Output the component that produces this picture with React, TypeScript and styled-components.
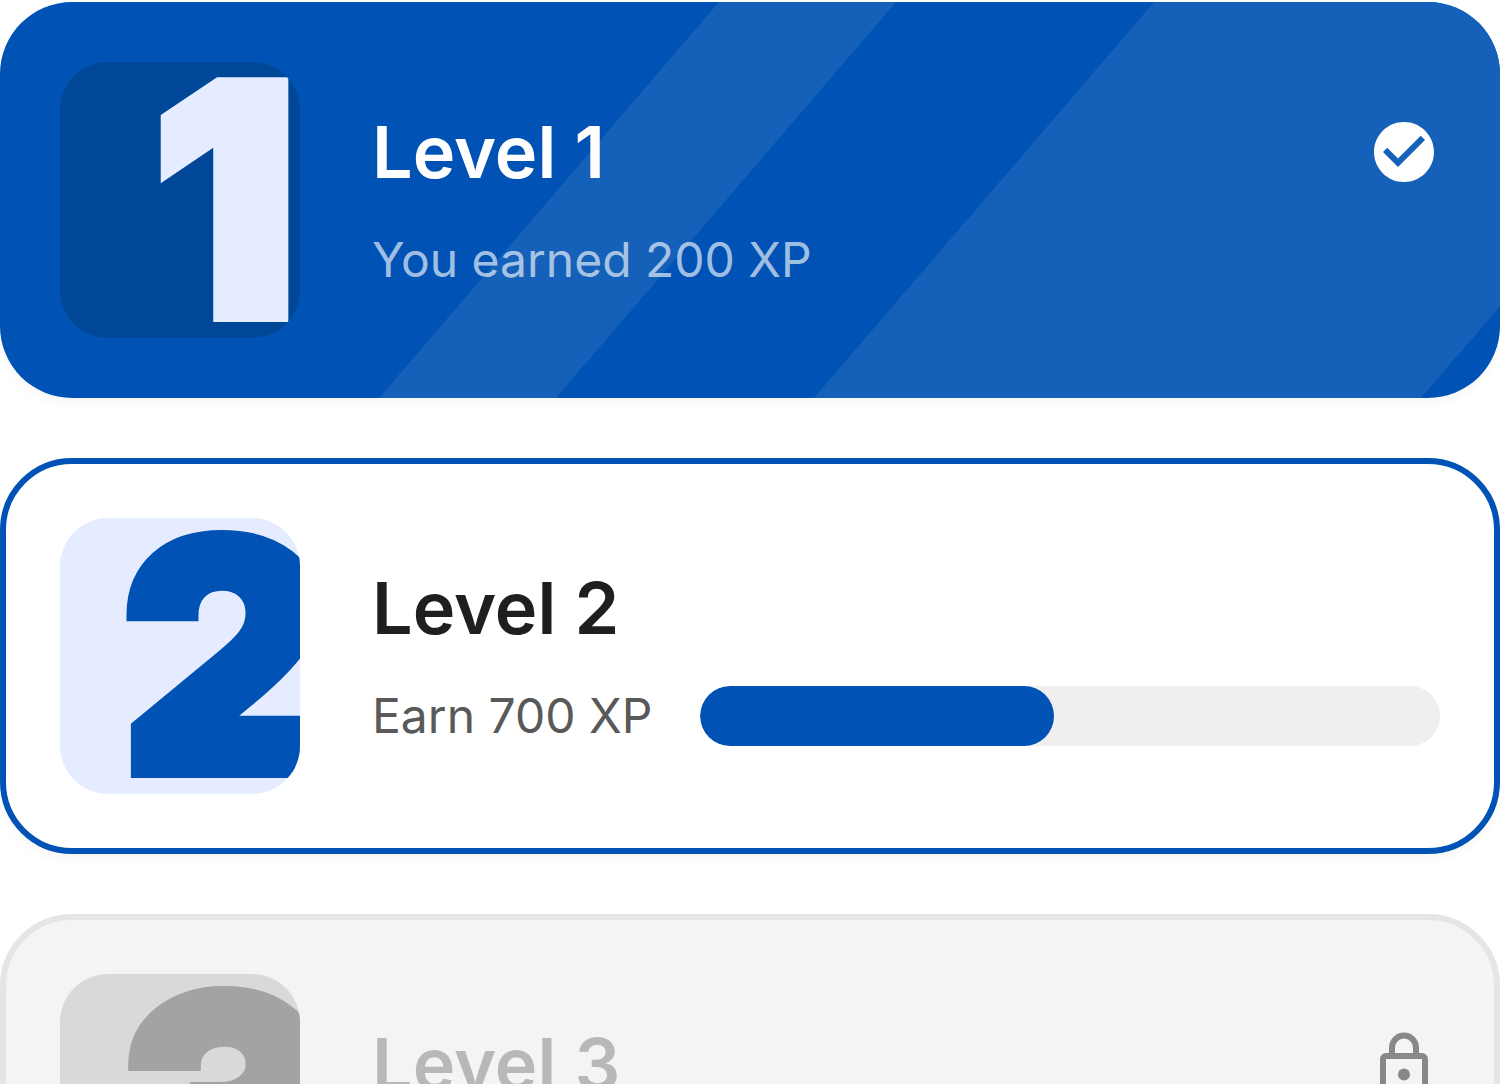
import React from "react";
import styled, { createGlobalStyle, css } from "styled-components";
import { MdCheckCircle } from "react-icons/md";

type Status = "done" | "active" | "locked";

const GlobalStyle = createGlobalStyle`
  body {
    margin: 0;
    background: #fff;
    font-family: Inter, "Liberation Sans", sans-serif;
  }
`;

const palette = {
  done: { card: "#0053b4", border: "#0053b4", tile: "#004797", numeral: "#e5ecff", title: "#fff", icon: "#fff" },
  active: { card: "#fff", border: "#0053b4", tile: "#e5ecff", numeral: "#0053b4", title: "#1f1f1f", icon: "#0053b4" },
  locked: { card: "#f4f4f4", border: "#e5e5e5", tile: "#d9d9d9", numeral: "#a3a3a3", title: "#b8b8b8", icon: "#888" },
};

const LevelList = styled.main`
  display: flex;
  flex-direction: column;
  gap: 60px;
  height: 100vh;
  padding-top: 2px;
  box-sizing: border-box;
  overflow: hidden;
`;

const Card = styled.section<{ $status: Status }>`
  position: relative;
  display: flex;
  flex-shrink: 0;
  align-items: flex-start;
  gap: 72px;
  box-sizing: border-box;
  padding: 60px;
  border-radius: 72px;
  background: ${(p) => palette[p.$status].card};
  box-shadow: 0 6px 12px rgba(0, 0, 0, 0.03);
  ${(p) =>
    p.$status !== "done" &&
    css`
      padding: 54px;
      border: 6px solid ${palette[p.$status].border};
    `}
`;

const Stripes = styled.svg`
  position: absolute;
  inset: 0;
  width: 100%;
  height: 100%;
  border-radius: 72px;
`;

const Tile = styled.div<{ $status: Status }>`
  position: relative;
  display: flex;
  flex-shrink: 0;
  align-items: center;
  justify-content: center;
  box-sizing: border-box;
  width: 240px;
  height: 276px;
  padding-left: 90px;
  border-radius: 48px;
  overflow: hidden;
  background: ${(p) => palette[p.$status].tile};
  color: ${(p) => palette[p.$status].numeral};
  font-size: 320px;
  font-weight: 900;
  line-height: 276px;
  -webkit-text-stroke: 12px currentColor;
`;

const Details = styled.div`
  position: relative;
  display: flex;
  flex: 1;
  flex-direction: column;
  gap: 36px;
  min-width: 0;
  padding-top: 48px;
`;

const Row = styled.div`
  display: flex;
  align-items: center;
  justify-content: space-between;
  gap: 48px;
`;

const Title = styled.h2<{ $status: Status }>`
  margin: 0;
  color: ${(p) => palette[p.$status].title};
  font-size: 72px;
  font-weight: 600;
  line-height: 84px;
`;

const Caption = styled.label<{ $status: Status }>`
  color: ${(p) => (p.$status === "done" ? "rgba(255, 255, 255, 0.64)" : "#595959")};
  font-size: 48px;
  font-weight: 400;
  line-height: 60px;
  white-space: nowrap;
`;

const Icon = styled.span<{ $status: Status }>`
  display: flex;
  color: ${(p) => palette[p.$status].icon};
`;

const Progress = styled.progress`
  appearance: none;
  flex: 1;
  min-width: 0;
  height: 60px;
  border: 0;
  border-radius: 30px;
  overflow: hidden;
  background: #efefef;

  &::-webkit-progress-bar {
    background: #efefef;
  }
  &::-webkit-progress-value {
    border-radius: 30px;
    background: #0053b4;
  }
`;

function LockIcon() {
  return (
    <svg width="72" height="72" viewBox="0 0 72 72" fill="none" stroke="currentColor" strokeWidth="6" aria-hidden="true">
      <path d="M24 27V19.5a12 12 0 0 1 24 0V27" />
      <rect x="15" y="28" width="42" height="38" rx="3" />
      <circle cx="36" cy="46.5" r="6" fill="currentColor" stroke="none" />
    </svg>
  );
}

interface Level {
  number: number;
  status: Status;
  caption?: string;
  progress?: number;
}

const levels: Level[] = [
  { number: 1, status: "done", caption: "You earned 200 XP" },
  { number: 2, status: "active", caption: "Earn 700 XP", progress: 478 },
  { number: 3, status: "locked" },
];

function LevelCard({ number, status, caption, progress }: Level) {
  const meterId = `level-${number}-progress`;
  return (
    <Card $status={status}>
      {status === "done" && (
        <Stripes viewBox="0 0 1500 396" preserveAspectRatio="xMaxYMid slice" aria-hidden="true">
          <path d="M719 0H896L556 396H379ZM1154 0H1762L1421 396H814Z" fill="#1561b9" />
        </Stripes>
      )}
      <Tile $status={status} aria-hidden="true">
        {number}
      </Tile>
      <Details>
        <Row>
          <Title $status={status}>Level {number}</Title>
          <Icon $status={status}>
            {status === "done" && <MdCheckCircle size={72} />}
            {status === "locked" && <LockIcon />}
          </Icon>
        </Row>
        {caption && (
          <Row>
            <Caption $status={status} as={progress ? "label" : "span"} htmlFor={progress ? meterId : undefined}>
              {caption}
            </Caption>
            {progress && <Progress id={meterId} max={1000} value={progress} />}
          </Row>
        )}
      </Details>
    </Card>
  );
}

export default function App() {
  return (
    <>
      <GlobalStyle />
      <LevelList>
        {levels.map((level) => (
          <LevelCard key={level.number} {...level} />
        ))}
      </LevelList>
    </>
  );
}
